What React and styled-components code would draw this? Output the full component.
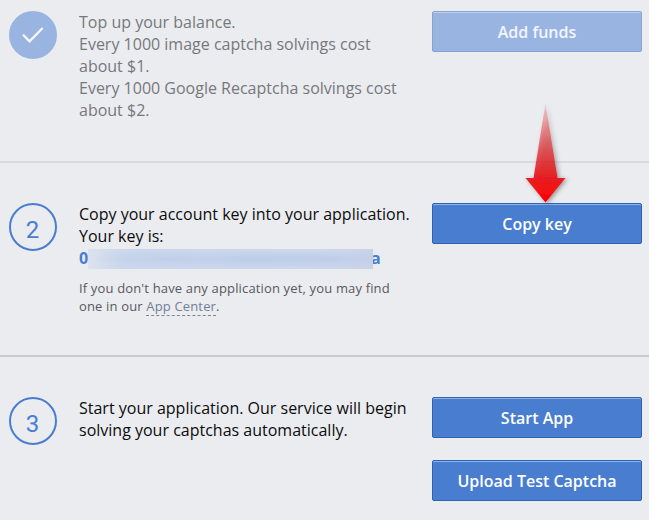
import React from 'react';
import styled, { createGlobalStyle, css } from 'styled-components';

const GlobalStyle = createGlobalStyle`
  * {
    box-sizing: border-box;
  }

  body {
    margin: 0;
    overflow: hidden;
    background-color: #ebecf0;
    font-family: 'Open Sans', 'Noto Sans', sans-serif;
  }
`;

const StyledWrapper = styled.main`
  width: 649px;
  height: 520px;
  overflow: hidden;
`;

const StyledStep = styled.section`
  display: flex;
  align-items: flex-start;
  height: ${({ height }) => height}px;
  padding: ${({ first }) => (first ? 11 : 40)}px 7px 0 9px;
  border-bottom: 2px solid ${({ line }) => line || 'transparent'};
`;

const StyledBadge = styled.div`
  display: flex;
  justify-content: center;
  align-items: center;
  flex: none;
  width: 48px;
  height: 48px;
  margin-right: 22px;
  padding: 5px 1px 0 0;
  border: 2px solid #487dd0;
  border-radius: 50%;
  color: #487dd0;
  font-family: Roboto, 'Open Sans', sans-serif;
  font-size: 24px;
  line-height: 1;

  ${({ done }) =>
    done &&
    css`
      padding: 0;
      border-color: #9ab4e1;
      background-color: #9ab4e1;
    `}
`;

const StyledText = styled.div`
  flex: none;
  width: 353px;
  color: ${({ muted }) => (muted ? '#77787b' : '#0c0c0d')};
`;

const StyledParagraph = styled.p`
  margin: 0;
  font-size: 16px;
  line-height: 22px;
  white-space: nowrap;
`;

const StyledKey = styled.div`
  display: flex;
  align-items: center;
  height: 22px;
  color: #487dd0;
  font-size: 16px;
  font-weight: 700;
  line-height: 22px;
`;

const StyledMask = styled.span`
  z-index: 1;
  width: 285px;
  height: 20px;
  margin: 2px -2px 0 0;
  background: radial-gradient(
      ellipse 75px 9px at 28% 50%,
      #c0cfe9,
      transparent
    ),
    radial-gradient(
      ellipse 90px 9px at 58% 50%,
      #bccce8,
      transparent
    ),
    radial-gradient(
      ellipse 80px 9px at 85% 50%,
      #bfcde8,
      transparent
    ),
    linear-gradient(
      90deg,
      #dce2ee,
      #cbd7ec 12%,
      #cbd7ec 90%,
      #c9d2e5
    );
`;

const StyledFirstChar = styled.span`
  width: 9px;
`;

const StyledNote = styled.p`
  margin: 10px 0 0;
  color: #58595c;
  font-size: 13px;
  letter-spacing: 0.155px;
  line-height: 18px;
  white-space: nowrap;
`;

const StyledLink = styled.a`
  border-bottom: 1px dashed #788796;
  color: #6f8094;
  text-decoration: none;
`;

const StyledActions = styled.div`
  position: relative;
  display: flex;
  flex-direction: column;
  gap: 22px;
  width: 210px;
`;

const StyledButton = styled.button`
  width: 210px;
  height: 41px;
  padding: 1px 0 0;
  border: 1px solid ${({ muted }) => (muted ? '#86a3d5' : '#2e62b4')};
  border-radius: 2px;
  background-color: ${({ muted }) => (muted ? '#9ab4e1' : '#487dd0')};
  box-shadow: inset 0 1px 0
    ${({ muted }) => (muted ? '#bfd0ed' : '#91b2e6')};
  color: ${({ muted }) => (muted ? '#f2f6fd' : '#fff')};
  font-family: inherit;
  font-size: 16px;
  font-weight: 600;
`;

const StyledArrow = styled.svg`
  position: absolute;
  top: -103px;
  left: 88px;
  pointer-events: none;
`;

const Arrow = () => (
  <StyledArrow width="60" height="110" viewBox="0 0 60 110">
    <defs>
      <linearGradient id="arrow" x1="0" y1="0" x2="0" y2="1">
        <stop offset="0" stopColor="#f00" stopOpacity="0.1" />
        <stop offset="0.4" stopColor="#e0141b" stopOpacity="0.55" />
        <stop offset="0.72" stopColor="#e81015" stopOpacity="0.88" />
        <stop offset="1" stopColor="#f00" />
      </linearGradient>
      <filter id="shadow" x="-30%" y="-10%" width="170%" height="125%">
        <feDropShadow
          dx="2"
          dy="1"
          stdDeviation="2"
          floodColor="#333"
          floodOpacity="0.5"
        />
      </filter>
    </defs>
    <path
      d="M25.5 3 37.5 78H45.5L25.5 102.5 5.5 78H13.5Z"
      fill="url(#arrow)"
      filter="url(#shadow)"
    />
  </StyledArrow>
);

const App = () => (
  <StyledWrapper>
    <GlobalStyle />
    <StyledStep first height={163} line="#d9dade">
      <StyledBadge done>
        <svg width="24" height="20" viewBox="0 0 24 20">
          <path
            d="M2 9.8 8.6 16.3 21.6 3"
            fill="none"
            stroke="#f5f8fd"
            strokeWidth="2.3"
          />
        </svg>
      </StyledBadge>
      <StyledText muted>
        <StyledParagraph>
          Top up your balance.
          <br />
          Every 1000 image captcha solvings cost
          <br />
          about $1.
          <br />
          Every 1000 Google Recaptcha solvings cost
          <br />
          about $2.
        </StyledParagraph>
      </StyledText>
      <StyledActions>
        <StyledButton muted>Add funds</StyledButton>
      </StyledActions>
    </StyledStep>
    <StyledStep height={194} line="#c9cacf">
      <StyledBadge>2</StyledBadge>
      <StyledText>
        <StyledParagraph>
          Copy your account key into your application.
          <br />
          Your key is:
        </StyledParagraph>
        <StyledKey>
          <StyledFirstChar>0</StyledFirstChar>
          <StyledMask />
          <span>a</span>
        </StyledKey>
        <StyledNote>
          If you don't have any application yet, you may find
          <br />
          one in our <StyledLink>App Center</StyledLink>.
        </StyledNote>
      </StyledText>
      <StyledActions>
        <StyledButton>Copy key</StyledButton>
        <Arrow />
      </StyledActions>
    </StyledStep>
    <StyledStep height={163}>
      <StyledBadge>3</StyledBadge>
      <StyledText>
        <StyledParagraph>
          Start your application. Our service will begin
          <br />
          solving your captchas automatically.
        </StyledParagraph>
      </StyledText>
      <StyledActions>
        <StyledButton>Start App</StyledButton>
        <StyledButton>Upload Test Captcha</StyledButton>
      </StyledActions>
    </StyledStep>
  </StyledWrapper>
);

export default App;
